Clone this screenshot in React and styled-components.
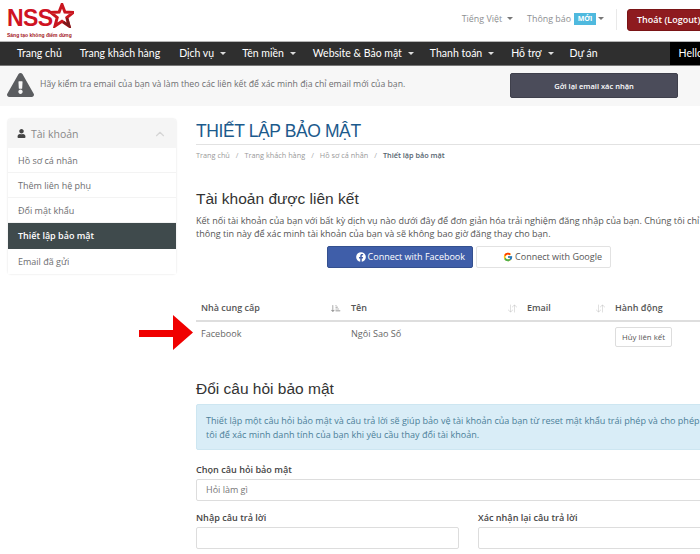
import React from "react";
import styled, { createGlobalStyle } from "styled-components";
import { FaUser, FaExclamationTriangle, FaFacebook } from "react-icons/fa";
import { FcGoogle } from "react-icons/fc";
import { BsArrowDownUp, BsSortDownAlt } from "react-icons/bs";
import { LuChevronUp } from "react-icons/lu";

const Global = createGlobalStyle`
  html, body { margin: 0; padding: 0; width: 700px; height: 554px; overflow: hidden; background: #fff; }
  body { font-family: "Open Sans", "Liberation Sans", sans-serif; color: #58595b; }
  * { box-sizing: border-box; }
`;

const Page = styled.div`width: 1000px; height: 554px; overflow: hidden;`;

const Header = styled.header`display: flex; height: 41px; width: 737px; align-items: flex-start; justify-content: space-between; padding: 0 0 0 7px;`;
const Logo = styled.div`display: flex; flex-direction: column; padding-top: 3px; width: 80px;`;
const LogoRow = styled.div`display: flex; align-items: flex-start; height: 27px;`;
const LogoText = styled.span`font: 700 23px/28px "Liberation Sans", sans-serif; color: #cf1322; letter-spacing: -0.6px; margin-top: 1px;`;
const Star = styled.svg`width: 24px; height: 25px; margin-left: -3px; margin-top: 0;`;
const Tagline = styled.div`font: 700 5px/7px "Liberation Sans", sans-serif; color: #a3161c; margin-top: 2px; white-space: nowrap;`;

const TopRight = styled.div`display: flex; align-items: flex-start; justify-content: flex-end; padding-top: 9px;`;
const TopLink = styled.span`font-size: 8.9px; line-height: 19px; color: #8d8f92; display: inline-flex; align-items: center; white-space: nowrap; margin-right: ${p => p.$mr}px;`;
const Caret = styled.i`display: inline-block; width: 0; height: 0; border-left: 3px solid transparent; border-right: 3px solid transparent; border-top: 3px solid ${p => p.$c || "#777"}; margin-left: ${p => p.$ml || 5}px;`;
const Badge = styled.span`background: #4fb9de; color: #fff; font-size: 7px; font-weight: 700; width: 22px; height: 12px; line-height: 12px; text-align: center; margin-left: 3px;`;
const Divider = styled.div`width: 1px; height: 21px; background: #e9e9e9; margin: 0 10px 0 0;`;
const Logout = styled.button`width: 110px; height: 22px; border: 1px solid #7a1416; border-radius: 3px; background: #8e1b1f; color: #fff; font: 600 9px/20px "Open Sans", sans-serif; text-align: left; padding: 0 0 0 9px; white-space: nowrap;`;

const Nav = styled.nav`display: flex; height: 25px; width: 1000px; background: #2f2f2f; border-top: 1px solid #b5b5b5; border-bottom: 1px solid #777; align-items: center; padding-left: 17px;`;
const NavItem = styled.span`font: 400 10.5px/23px "Lato", sans-serif; color: #fff; display: inline-flex; align-items: center; white-space: nowrap; margin-right: ${p => p.$mr}px;`;
const Hello = styled.div`flex: 1; height: 23px; background: #000; color: #fff; font: 400 10.5px/23px "Lato", sans-serif; padding-left: 9px; white-space: nowrap;`;

const Notice = styled.div`display: flex; height: 40px; width: 700px; background: #f7f7f7; align-items: flex-start; padding-left: 7px;`;
const Warn = styled(FaExclamationTriangle)`width: 27px; height: 24px; color: #5b5d60; margin-top: 7px;`;
const NoticeText = styled.span`font-size: 8.7px; line-height: 14px; color: #6d6e70; margin: 11px 0 0 6px; white-space: nowrap; width: 470px;`;
const Resend = styled.button`width: 168px; height: 25px; margin-top: 7px; background: #4b4c5a; border: 1px solid #3f404c; border-radius: 2px; color: #fff; font: 600 7.5px/22px "Open Sans", sans-serif; padding: 0;`;

const Body = styled.div`display: flex; align-items: flex-start; padding: 13px 0 0 8px;`;

const Side = styled.aside`width: 168px; flex: none; border-radius: 3px; background: #fff; box-shadow: 0 0 2px rgba(0,0,0,.16); margin-right: 20px;`;
const SideHead = styled.div`display: flex; align-items: center; height: 29px; background: #f5f5f5; padding: 0 9px 0 9px; font-size: 10.5px; color: #888; border-radius: 3px 3px 0 0;`;
const SideHeadText = styled.span`flex: 1; margin-left: 5px;`;
const SideItem = styled.div`height: ${p => p.$active ? 26 : 25}px; font-size: 9px; line-height: 25px; padding-left: 10px; color: ${p => p.$active ? "#fff" : "#6d6e70"}; background: ${p => p.$active ? "#3f4a4c" : "#fff"}; border-bottom: 1px solid ${p => p.$active ? "#3f4a4c" : "#f3f3f3"}; font-weight: ${p => p.$active ? 600 : 400}; &:last-child { border-bottom: 0; }`;

const Main = styled.main`width: 545px; flex: none;`;
const Title = styled.h1`margin: 0; font: 400 17.5px/24px "Liberation Sans", sans-serif; letter-spacing: -0.4px; color: #1b5a8c; height: 26px; border-bottom: 1px solid #e2e2e2; white-space: nowrap; width: 510px;`;
const Crumbs = styled.div`display: flex; font-size: 7.3px; line-height: 12px; color: #999; margin-top: 4px; white-space: nowrap;`;
const Crumb = styled.span`color: ${p => p.$current ? "#54636e" : "#999"}; font-weight: ${p => p.$current ? 600 : 400};`;
const Sep = styled.span`margin: 0 6px; color: #aaa;`;
const H3 = styled.h3`margin: ${p => p.$mt}px 0 0; font: 400 15.5px/20px "Liberation Sans", sans-serif; color: #333; white-space: nowrap;`;
const Para = styled.p`margin: 5px 0 0; font-size: 9.05px; line-height: 13px; color: #555; white-space: nowrap;`;
const SocialRow = styled.div`display: flex; margin: 6px 0 0 131px; gap: 3px;`;
const SocialBtn = styled.button`display: flex; align-items: center; justify-content: flex-end; gap: 2px; height: 22px; width: ${p => p.$w}px; padding: 0 ${p => p.$pr}px 0 0; border-radius: 2px; font: 400 9px/20px "Open Sans", sans-serif; white-space: nowrap; background: ${p => p.$fb ? "#3f5ea9" : "#fff"}; color: ${p => p.$fb ? "#fff" : "#555"}; border: 1px solid ${p => p.$fb ? "#34508f" : "#e2e2e2"};`;

const Table = styled.div`margin-top: 32px; width: 545px;`;
const Grid = styled.div`display: grid; grid-template-columns: 150px 176px 88px 1fr;`;
const HeadRow = styled(Grid)`height: 22px; border-bottom: 2px solid #dedede;`;
const HCell = styled.div`display: flex; align-items: center; font-size: 9px; font-weight: 600; line-height: 14px; color: #555; padding: 0 5px 4px 5px; justify-content: space-between; white-space: nowrap;`;
const SortOn = styled(BsSortDownAlt)`width: 10px; height: 10px; color: #777;`;
const SortOff = styled(BsArrowDownUp)`width: 9px; height: 9px; color: #c8c8c8;`;
const Row = styled(Grid)`height: 29px;`;
const Cell = styled.div`font-size: 9.1px; line-height: 14px; color: #666; padding: 5px 5px 0; white-space: nowrap;`;
const Unlink = styled.button`width: 57px; height: 20px; margin-top: 5px; margin-left: 5px; background: #fff; border: 1px solid #ddd; border-radius: 2px; font: 400 7.8px/18px "Open Sans", sans-serif; color: #555; padding: 0; white-space: nowrap;`;

const Info = styled.div`margin-top: 5px; height: 46px; width: 545px; background: #d9edf7; border: 1px solid #cde6f1; border-radius: 2px; padding: 9px 9px; font-size: 9.05px; line-height: 13.5px; color: #4b7f99; white-space: nowrap;`;
const Label = styled.label`display: block; font-size: 9.1px; font-weight: 600; line-height: 13px; color: #444; white-space: nowrap;`;
const Field = styled.div`height: 22px; margin-top: 3px; width: ${p => p.$w || "100%"}; background: #fff; border: 1px solid #ddd; border-radius: 2px; font-size: 9px; line-height: 20px; color: #777; padding-left: 9px;`;
const FormGroup = styled.div`margin-top: ${p => p.$mt}px;`;
const TwoCols = styled.div`display: grid; grid-template-columns: 263px 263px; column-gap: 19px; margin-top: 10px;`;

const Arrow = styled.svg`position: absolute; left: 139px; top: 315px; width: 54px; height: 35px;`;

const navItems = [
  ["Trang chủ", 18, false], ["Trang khách hàng", 19, false], ["Dịch vụ", 16, true], ["Tên miền", 17, true],
  ["Website & Bảo mật", 16, true], ["Thanh toán", 17, true], ["Hỗ trợ", 16, true], ["Dự án", 72, false],
];

export default function App() {
  return (
    <Page>
      <Global />
      <Header>
        <Logo>
          <LogoRow>
            <LogoText>NSS</LogoText>
            <Star viewBox="0 0 24 25">
              <path d="M12 1.5l2.9 7.6 8.4.3-6.5 5.2 2.2 8.4-7-4.8-7 4.8 2.2-8.4L.7 9.4l8.4-.3z" fill="none" stroke="#c9151f" strokeWidth="3" strokeLinejoin="miter" />
              <path d="M17 15l2.4 8.2-6-4.2" fill="none" stroke="#7a1a1c" strokeWidth="2.4" />
            </Star>
          </LogoRow>
          <Tagline>Sáng tạo không điểm dừng</Tagline>
        </Logo>
        <TopRight>
          <TopLink $mr={14}>Tiếng Việt<Caret /></TopLink>
          <TopLink $mr={12}>Thông báo<Badge>MỚI</Badge><Caret $ml={2} /></TopLink>
          <Divider />
          <Logout>Thoát (Logout)</Logout>
        </TopRight>
      </Header>
      <Nav>
        {navItems.map(([t, mr, c]) => (
          <NavItem key={t} $mr={mr}>{t}{c && <Caret $c="#ddd" $ml={6} />}</NavItem>
        ))}
        <Hello>Hello</Hello>
      </Nav>
      <Notice>
        <Warn />
        <NoticeText>Hãy kiểm tra email của bạn và làm theo các liên kết để xác minh địa chỉ email mới của bạn.</NoticeText>
        <Resend>Gởi lại email xác nhận</Resend>
      </Notice>
      <Body>
        <Side>
          <SideHead>
            <FaUser size={9} color="#444" />
            <SideHeadText>Tài khoản</SideHeadText>
            <LuChevronUp size={14} color="#d5d5d5" />
          </SideHead>
          <SideItem>Hồ sơ cá nhân</SideItem>
          <SideItem>Thêm liên hệ phụ</SideItem>
          <SideItem>Đổi mật khẩu</SideItem>
          <SideItem $active>Thiết lập bảo mật</SideItem>
          <SideItem>Email đã gửi</SideItem>
        </Side>
        <Main>
          <Title>THIẾT LẬP BẢO MẬT</Title>
          <Crumbs>
            <Crumb>Trang chủ</Crumb><Sep>/</Sep>
            <Crumb>Trang khách hàng</Crumb><Sep>/</Sep>
            <Crumb>Hồ sơ cá nhân</Crumb><Sep>/</Sep>
            <Crumb $current>Thiết lập bảo mật</Crumb>
          </Crumbs>
          <H3 $mt={28}>Tài khoản được liên kết</H3>
          <Para>
            Kết nối tài khoản của bạn với bất kỳ dịch vụ nào dưới đây để đơn giản hóa trải nghiệm đăng nhập của bạn. Chúng tôi chỉ<br />
            thông tin này để xác minh tài khoản của bạn và sẽ không bao giờ đăng thay cho bạn.
          </Para>
          <SocialRow>
            <SocialBtn $fb $w={146} $pr={7}><FaFacebook size={10} />Connect with Facebook</SocialBtn>
            <SocialBtn $w={135} $pr={8}><FcGoogle size={10} />Connect with Google</SocialBtn>
          </SocialRow>
          <Table>
            <HeadRow>
              <HCell>Nhà cung cấp<SortOn /></HCell>
              <HCell>Tên<SortOff /></HCell>
              <HCell>Email<SortOff /></HCell>
              <HCell>Hành động</HCell>
            </HeadRow>
            <Row>
              <Cell>Facebook</Cell>
              <Cell>Ngôi Sao Số</Cell>
              <Cell />
              <div><Unlink>Hủy liên kết</Unlink></div>
            </Row>
          </Table>
          <H3 $mt={28}>Đổi câu hỏi bảo mật</H3>
          <Info>
            Thiết lập một câu hỏi bảo mật và câu trả lời sẽ giúp bảo vệ tài khoản của bạn từ reset mật khẩu trái phép và cho phép<br />
            tôi để xác minh danh tính của bạn khi yêu cầu thay đổi tài khoản.
          </Info>
          <FormGroup $mt={13}>
            <Label>Chọn câu hỏi bảo mật</Label>
            <Field>Hỏi làm gì</Field>
          </FormGroup>
          <TwoCols>
            <div><Label>Nhập câu trả lời</Label><Field /></div>
            <div><Label>Xác nhận lại câu trả lời</Label><Field /></div>
          </TwoCols>
        </Main>
      </Body>
      <Arrow viewBox="0 0 54 35"><path d="M0 15h34V0l20 17.5L34 35V22H0z" fill="#f00000" /></Arrow>
    </Page>
  );
}
